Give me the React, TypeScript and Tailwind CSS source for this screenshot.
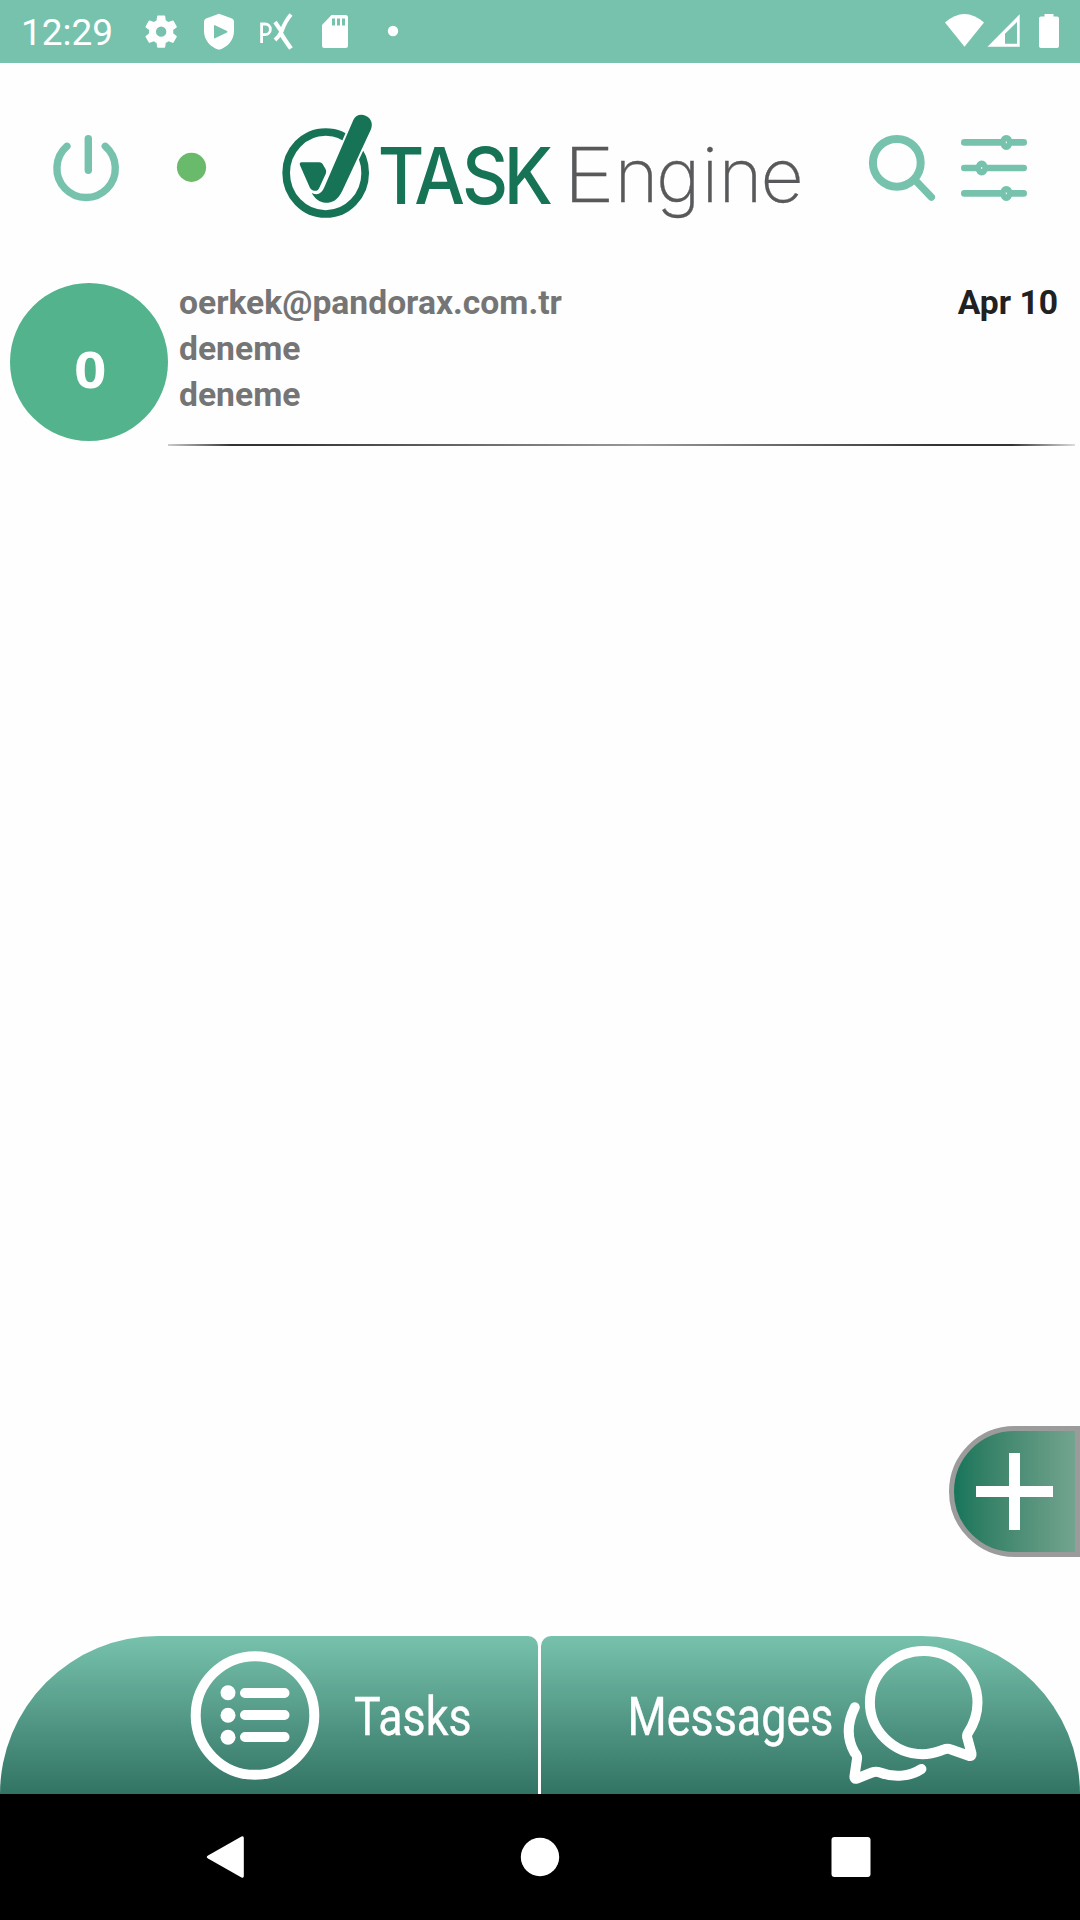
import type { ReactNode } from 'react';

interface Task {
  id: number;
  count: number;
  sender: string;
  title: string;
  detail: string;
  date: string;
}

const TASKS: Task[] = [
  { id: 1, count: 0, sender: 'oerkek@pandorax.com.tr', title: 'deneme', detail: 'deneme', date: 'Apr 10' },
];

function StatusBar() {
  return (
    <div className="flex h-[63px] shrink-0 bg-[#77c2ad] pl-[21px] text-white">
      <span className="mt-[11px] w-[114px] text-[37px] leading-[43px] whitespace-nowrap">12:29</span>
      <svg className="h-[63px] w-[270px]" viewBox="0 0 270 63" fill="currentColor">
        {/* Settings */}
        <g transform="translate(6 11.5) scale(1.68)">
          <path d="M19.14 12.94c.04-.3.06-.61.06-.94 0-.32-.02-.64-.07-.94l2.03-1.58a.49.49 0 0 0 .12-.61l-1.92-3.32a.488.488 0 0 0-.59-.22l-2.39.96c-.5-.38-1.03-.7-1.62-.94l-.36-2.54a.484.484 0 0 0-.48-.41h-3.84c-.24 0-.43.17-.47.41l-.36 2.54c-.59.24-1.13.57-1.62.94l-2.39-.96c-.22-.08-.47 0-.59.22L2.74 8.87c-.12.21-.08.47.12.61l2.03 1.58c-.05.3-.09.63-.09.94s.02.64.07.94l-2.03 1.58a.49.49 0 0 0-.12.61l1.92 3.32c.12.22.37.29.59.22l2.39-.96c.5.38 1.03.7 1.62.94l.36 2.54c.05.24.24.41.48.41h3.84c.24 0 .44-.17.47-.41l.36-2.54c.59-.24 1.13-.56 1.62-.94l2.39.96c.22.08.47 0 .59-.22l1.92-3.32c.12-.22.07-.47-.12-.61l-2.01-1.58zM12 15.1a3.1 3.1 0 1 1 0-6.2 3.1 3.1 0 0 1 0 6.2z" />
        </g>
        {/* Play protect */}
        <path
          fillRule="evenodd"
          d="M84 13.7 L97 18.5 Q99 19.4 99 21.5 V31 C99 40 92.5 47.5 84 49.7 C75.5 47.5 69 40 69 31 V21.5 Q69 19.4 71 18.5 Z M80 25.3 Q79 24.7 79 26 V37.5 Q79 38.8 80 38.2 L92 32.5 Q93 31.7 92 31 Z"
        />
        {/* Px */}
        <g fill="none" stroke="currentColor">
          <path strokeWidth="2.8" d="M126.6 43V24h3.500a5.300 5.300 0 0 1 0 10.600h-3.500" />
          <path strokeWidth="4" d="M140 22L146.500 31.500" />
          <path strokeWidth="4.500" d="M146 33.500Q149 39 156 48.500" />
          <path strokeWidth="4" d="M156 14.500Q150 21.500 146.500 31.500Q144.500 36 140 40" />
        </g>
        {/* SD card */}
        <path
          fillRule="evenodd"
          d="M196.500 15H210.500Q213 15 213 17.500V45.500Q213 48 210.500 48H189.500Q187 48 187 45.500V25ZM197 18.500V25.500H200V18.500ZM202 18.500V25.500H205V18.500ZM207 18.500V25.500H210V18.500Z"
        />
        <circle cx="258" cy="31" r="5.200" />
      </svg>
      <svg className="mr-[18px] ml-auto h-[63px] w-[120px]" viewBox="0 0 120 63" fill="currentColor">
        <path d="M3 22.500Q22.500 5.500 42 22.500L22.500 46.800Z" />
        <path fillRule="evenodd" d="M77.700 14.300V46.800H45.500ZM75 22L63 33.800V43.800H75Z" />
        <path d="M102.500 14H111.500V16.500H115Q117 16.500 117 18.500V46Q117 48 115 48H99Q97 48 97 46V18.500Q97 16.500 99 16.500H102.500Z" />
      </svg>
    </div>
  );
}

function Logo() {
  return (
    <svg className="h-[130px] w-[540px]" viewBox="0 0 540 130">
      {/* Check mark in ring */}
      <g transform="scale(.33333)" fill="#177356">
        <ellipse cx="167" cy="219" rx="118.500" ry="123" fill="none" stroke="#177356" strokeWidth="23" />
        <path
          stroke="#fefefe"
          strokeWidth="12"
          paintOrder="stroke"
          d="M250 60C258 41 283 39 298 55C307 66 307 78 302 90L217 272C203 301 187 308 167 308C147 307 135 296 125 279C144 287 153 281 162 264Z"
        />
        <path d="M95 187H147C154 187 157 190 160 196L167 208C169 213 169 217 167 222L148 263C144 271 139 274 132 272C125 271 122 268 119 262L90 196C88 190 90 187 95 187Z" />
      </g>
      <text
        className="font-['Inter',sans-serif] font-medium"
        fill="#177356"
        fontSize="78.500"
        transform="scale(.91 1)"
        x="118.500 158.500 211 257"
        y="103.700"
      >
        TASK
      </text>
      <g className="font-['Inter',sans-serif] font-extralight" fill="#58595b" stroke="#58595b" strokeWidth=".3" fontSize="75">
        <text x="293" y="102" textLength="52" lengthAdjust="spacingAndGlyphs">E</text>
        <text x="344.500 386 431.500 448.500 490.500" y="102">ngine</text>
      </g>
    </svg>
  );
}

function Header() {
  return (
    <header className="flex h-[220px] shrink-0 items-start pt-[37px]">
      <svg className="h-[130px] w-[270px]" viewBox="0 0 270 130" fill="none">
        <g stroke="#77c2ad" strokeWidth="7.400" strokeLinecap="round">
          <path d="M66.900 46.300A29.200 29.200 0 1 0 105.300 46.300" />
          <path d="M88.300 38.700V70.300" />
        </g>
        <circle cx="191.500" cy="67.300" r="14.600" fill="#69ba6b" />
      </svg>
      <Logo />
      <svg className="ml-[40px] h-[130px] w-[230px]" viewBox="0 0 230 130" fill="none" stroke="#77c2ad" strokeLinecap="round">
        <circle cx="46.800" cy="62.800" r="23.900" strokeWidth="8" />
        <path d="M65 80L81.300 97" strokeWidth="7.500" />
        <g strokeWidth="6.600">
          <path d="M114.300 42.400H173.700M114.300 68H173.700M114.300 93.400H173.700" />
        </g>
        <g fill="#77c2ad" stroke="none">
          <ellipse cx="156.300" cy="42.400" rx="6.200" ry="7.500" />
          <ellipse cx="131.700" cy="68" rx="6.200" ry="7.500" />
          <ellipse cx="156.300" cy="93.400" rx="6.200" ry="7.500" />
        </g>
        <path d="M156.300 41.500v1.800M131.700 67.100v1.800M156.300 92.500v1.800" stroke="#fff" strokeWidth="1" strokeLinecap="butt" />
      </svg>
    </header>
  );
}

function TaskRow({ task }: { task: Task }) {
  return (
    <div className="flex h-[163px] pl-[10px]">
      <div className="flex size-[158px] shrink-0 items-center justify-center rounded-full bg-[#52b38d]">
        <span className="mt-[13px] ml-[2px] scale-x-[1.12] font-['Noto_Sans',sans-serif] text-[50px] leading-none font-bold text-white">
          {task.count}
        </span>
      </div>
      <div className="mr-[5px] flex flex-1 flex-col justify-between">
        <div className="flex justify-between pr-[17px] pl-[11px] text-[33.65px] leading-[46px] font-bold text-[#757575]">
          <div className="-mt-[3px]">
            <p>{task.sender}</p>
            <p>{task.title}</p>
            <p>{task.detail}</p>
          </div>
          <span className="-mt-[3px] text-[#212121]">{task.date}</span>
        </div>
        <div className="h-[2px] bg-[linear-gradient(to_right,#ccc,#333_7%,#333_12%,#999_52%,#333_85%,#333_93%,#ddd)]" />
      </div>
    </div>
  );
}

function TabButton({ className, children }: { className: string; children: ReactNode }) {
  return (
    <button className={`flex h-[158px] items-start bg-linear-to-b from-[#77c2ad] to-[#327464] text-white ${className}`}>
      {children}
    </button>
  );
}

function BottomTabs() {
  return (
    <div className="flex shrink-0 gap-[3px]">
      <TabButton className="w-[538px] rounded-tl-[158px] rounded-tr-[10px] pl-[190px]">
        <svg className="mt-[14px] h-[130px] w-[130px] shrink-0" viewBox="0 0 130 130">
          <circle cx="65" cy="65.500" r="59.300" fill="none" stroke="#fff" strokeWidth="10" />
          <g stroke="#fff" strokeWidth="10" strokeLinecap="round">
            <path d="M55 43H94.500M55 65H94.500M55 87H94.500" />
          </g>
          <g fill="#fff">
            <circle cx="38" cy="42.700" r="7.500" />
            <circle cx="38" cy="65.300" r="7.500" />
            <circle cx="38" cy="87.300" r="7.500" />
          </g>
        </svg>
        <svg className="h-[158px] w-[200px]" viewBox="320 0 200 158" fill="#fff" stroke="#fff" strokeWidth=".4">
          <text x="354" y="99" fontSize="53.500" textLength="117.500" lengthAdjust="spacingAndGlyphs">Tasks</text>
        </svg>
      </TabButton>
      <TabButton className="w-[539px] rounded-tl-[10px] rounded-tr-[158px] pl-[79px]">
        <svg className="h-[158px] w-[380px]" viewBox="620 1636 380 158">
          <text
            x="627.500"
            y="1735"
            fontSize="53.500"
            fill="#fff"
            stroke="#fff"
            strokeWidth=".4"
            textLength="206"
            lengthAdjust="spacingAndGlyphs"
          >
            Messages
          </text>
          <g fill="none" stroke="#fff" strokeWidth="10" strokeLinecap="round" strokeLinejoin="round">
            <path d="M967.700 1733.500C974 1724 977.500 1714 977.500 1702.500A53.800 51.700 0 1 0 922.500 1754.300C932 1754 938 1751.500 943 1749.800Q947.400 1748 951 1749.500L969.500 1756Q972 1756.500 971.500 1753.500L967.500 1738.500Q966.500 1735.500 967.700 1733.500Z" />
            <path d="M854.800 1707.300C847 1723 847 1739 854.500 1752.500Q857.500 1755.500 857 1759L854.500 1776Q854 1779.500 857 1778.500L872 1772.500Q876 1771 880 1772.500C894 1778 910 1776.500 921.400 1769" />
          </g>
        </svg>
      </TabButton>
    </div>
  );
}

function AddButton() {
  return (
    <button className="flex h-[131px] w-[131px] items-center justify-center self-end rounded-l-[66px] border-[5px] border-[#9b9b9b] bg-linear-to-r from-[#15755a] to-[#72a48f]">
      <svg className="h-[77px] w-[77px]" viewBox="0 0 77 77" stroke="#fff" strokeWidth="11">
        <path d="M0 38.500H77M38.500 0V77" />
      </svg>
    </button>
  );
}

function NavBar() {
  return (
    <div className="h-[126px] shrink-0 bg-black">
      <svg className="h-[126px] w-[1080px]" viewBox="0 0 1080 126" fill="#fff">
        <path d="M241.500 42.500Q243.800 41.500 243.800 44V82Q243.800 84.500 241.500 83.500L208 64.500Q205.500 63 208 61.500Z" />
        <circle cx="540" cy="63" r="19.200" />
        <rect x="831.500" y="43" width="39" height="40" rx="3" />
      </svg>
    </div>
  );
}

export default function App() {
  return (
    <div className="flex h-[1920px] w-[1080px] flex-col overflow-hidden bg-[#fefefe] font-['Roboto',sans-serif]">
      <StatusBar />
      <Header />
      <main className="flex flex-1 flex-col justify-between pb-[79px]">
        <div>
          {TASKS.map((task) => (
            <TaskRow key={task.id} task={task} />
          ))}
        </div>
        <AddButton />
      </main>
      <BottomTabs />
      <NavBar />
    </div>
  );
}
